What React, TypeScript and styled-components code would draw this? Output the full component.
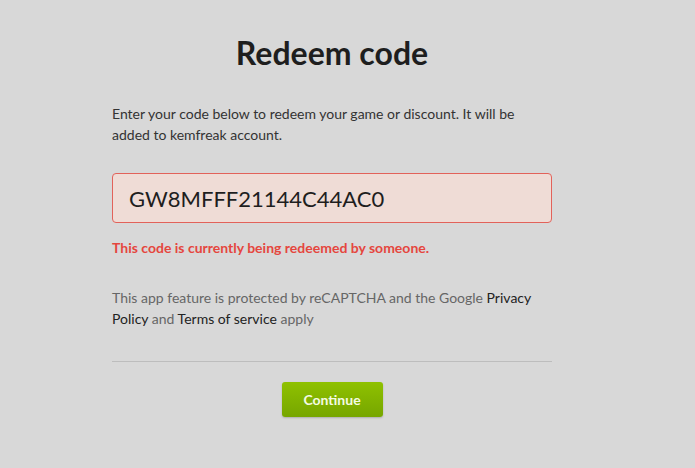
import React from "react";
import styled, { createGlobalStyle } from "styled-components";

const GlobalStyle = createGlobalStyle`
  html, body {
    margin: 0;
    padding: 0;
    background: #d8d8d8;
    font-family: Lato, "Open Sans", Arial, sans-serif;
  }
`;

const Page = styled.main`
  width: 695px;
  min-height: 468px;
  box-sizing: border-box;
  padding: 34px 0 0 112px;
`;

const Panel = styled.section`
  width: 440px;
  display: flex;
  flex-direction: column;
`;

const Title = styled.h1`
  margin: 0;
  font-size: 32px;
  line-height: 38px;
  font-weight: 700;
  color: #1e1e1e;
  text-align: center;
`;

const Intro = styled.p`
  margin: 31px 0 0;
  font-size: 14px;
  line-height: 21px;
  color: #333;
`;

const CodeInput = styled.input<{ $invalid?: boolean }>`
  margin-top: 28px;
  box-sizing: border-box;
  width: 440px;
  height: 50px;
  padding: 0 16px;
  border: 1px solid ${(p) => (p.$invalid ? "#e2625a" : "#bbb")};
  border-radius: 4px;
  background: ${(p) => (p.$invalid ? "#efdcd6" : "#fff")};
  font-family: inherit;
  font-size: 22px;
  color: #1e1e1e;
  outline: none;
`;

const ErrorText = styled.p`
  margin: 15px 0 0;
  font-size: 14px;
  line-height: 20px;
  font-weight: 700;
  color: #e5463e;
`;

const Notice = styled.p`
  margin: 29px 0 0;
  font-size: 14px;
  line-height: 21px;
  color: #666;
`;

const Link = styled.a`
  color: #222;
  text-decoration: none;
`;

const Divider = styled.hr`
  margin: 32px 0 0;
  border: 0;
  border-top: 1px solid #bdbdbd;
`;

const Actions = styled.div`
  display: flex;
  justify-content: center;
  margin-top: 20px;
`;

const Button = styled.button`
  width: 101px;
  height: 35px;
  border: 0;
  border-radius: 3px;
  background: linear-gradient(#8fc100, #76a600);
  box-shadow: 0 1px 2px rgba(0, 0, 0, 0.2);
  color: #f4fbe4;
  font-family: inherit;
  font-size: 14px;
  font-weight: 700;
  cursor: pointer;
`;

export default function App() {
  return (
    <Page>
      <GlobalStyle />
      <Panel>
        <Title>Redeem code</Title>
        <Intro>
          Enter your code below to redeem your game or discount. It will be added to kemfreak
          account.
        </Intro>
        <CodeInput $invalid defaultValue="GW8MFFF21144C44AC0" />
        <ErrorText>This code is currently being redeemed by someone.</ErrorText>
        <Notice>
          This app feature is protected by reCAPTCHA and the Google <Link href="#">Privacy Policy</Link> and{" "}
          <Link href="#">Terms of service</Link> apply
        </Notice>
        <Divider />
        <Actions>
          <Button>Continue</Button>
        </Actions>
      </Panel>
    </Page>
  );
}
